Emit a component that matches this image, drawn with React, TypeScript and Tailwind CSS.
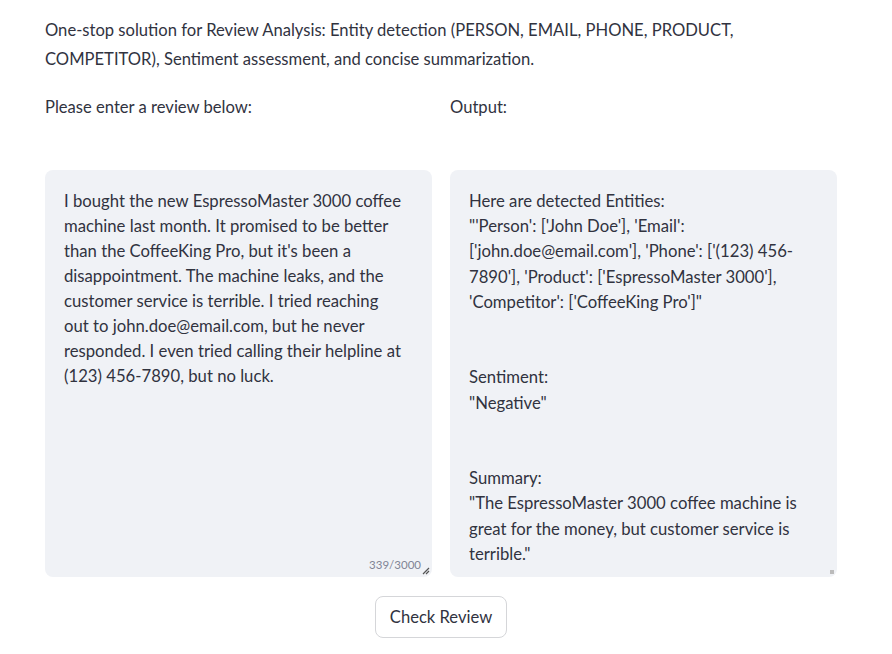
const REVIEW =
  "I bought the new EspressoMaster 3000 coffee machine last month. It promised to be better than the CoffeeKing Pro, but it's been a disappointment. The machine leaks, and the customer service is terrible. I tried reaching out to john.doe@email.com, but he never responded. I even tried calling their helpline at (123) 456-7890, but no luck."

const OUTPUT = [
  "Here are detected Entities:",
  "\"'Person': ['John Doe'], 'Email': ['john.doe@email.com'], 'Phone': ['(123) 456-7890'], 'Product': ['EspressoMaster 3000'], 'Competitor': ['CoffeeKing Pro']\"",
  "",
  "",
  "Sentiment:",
  "\"Negative\"",
  "",
  "",
  "Summary:",
  "\"The EspressoMaster 3000 coffee machine is great for the money, but customer service is terrible.\"",
]

const ResizeGrip = () => (
  <svg width="10" height="10" viewBox="0 0 10 10" className="absolute right-[2px] bottom-[2px]">
    <path d="M9 3 L3 9 M9 6 L6 9" stroke="#555" strokeWidth="1.2" />
  </svg>
)

export default function App() {
  return (
    <div className="min-h-screen bg-white text-[#31333f] font-['Lato',sans-serif]">
      <main className="w-[792px] ml-[45px] pt-[16px]">
        <p className="text-[16.6px] leading-[29px]">
          One-stop solution for Review Analysis: Entity detection (PERSON, EMAIL, PHONE, PRODUCT,
          COMPETITOR), Sentiment assessment, and concise summarization.
        </p>

        <div className="grid grid-cols-2 gap-[18px] mt-[20px]">
          {/* input column */}
          <div className="flex flex-col">
            <label className="text-[16.6px] leading-[26px] h-[26px]">Please enter a review below:</label>
            <div className="relative mt-[50px] h-[407px] rounded-[8px] bg-[#f0f2f6]">
              <div className="pl-[19px] pr-[26px] pt-[19px] text-[16.7px] leading-[25px]">{REVIEW}</div>
              <span className="absolute right-[11px] bottom-[4px] text-[11.5px] text-[#808495]">339/3000</span>
              <ResizeGrip />
            </div>
          </div>

          {/* output column */}
          <div className="flex flex-col">
            <label className="text-[16.6px] leading-[26px] h-[26px]">Output:</label>
            <div className="relative mt-[50px] h-[407px] rounded-[8px] bg-[#f0f2f6]">
              <div className="px-[19px] pt-[19px] text-[16.7px] leading-[25.2px] whitespace-pre-wrap">
                {OUTPUT.map((line, i) => (
                  <div key={i} className="min-h-[25.2px]">{line}</div>
                ))}
              </div>
              <span className="absolute right-[3px] bottom-[3px] w-[4px] h-[4px] bg-[#bbb]" />
            </div>
          </div>
        </div>

        <div className="flex justify-center mt-[19px]">
          <button className="h-[42px] px-[14px] rounded-[8px] border border-[#d5d6d9] bg-white text-[16.6px]">
            Check Review
          </button>
        </div>
      </main>
    </div>
  )
}
